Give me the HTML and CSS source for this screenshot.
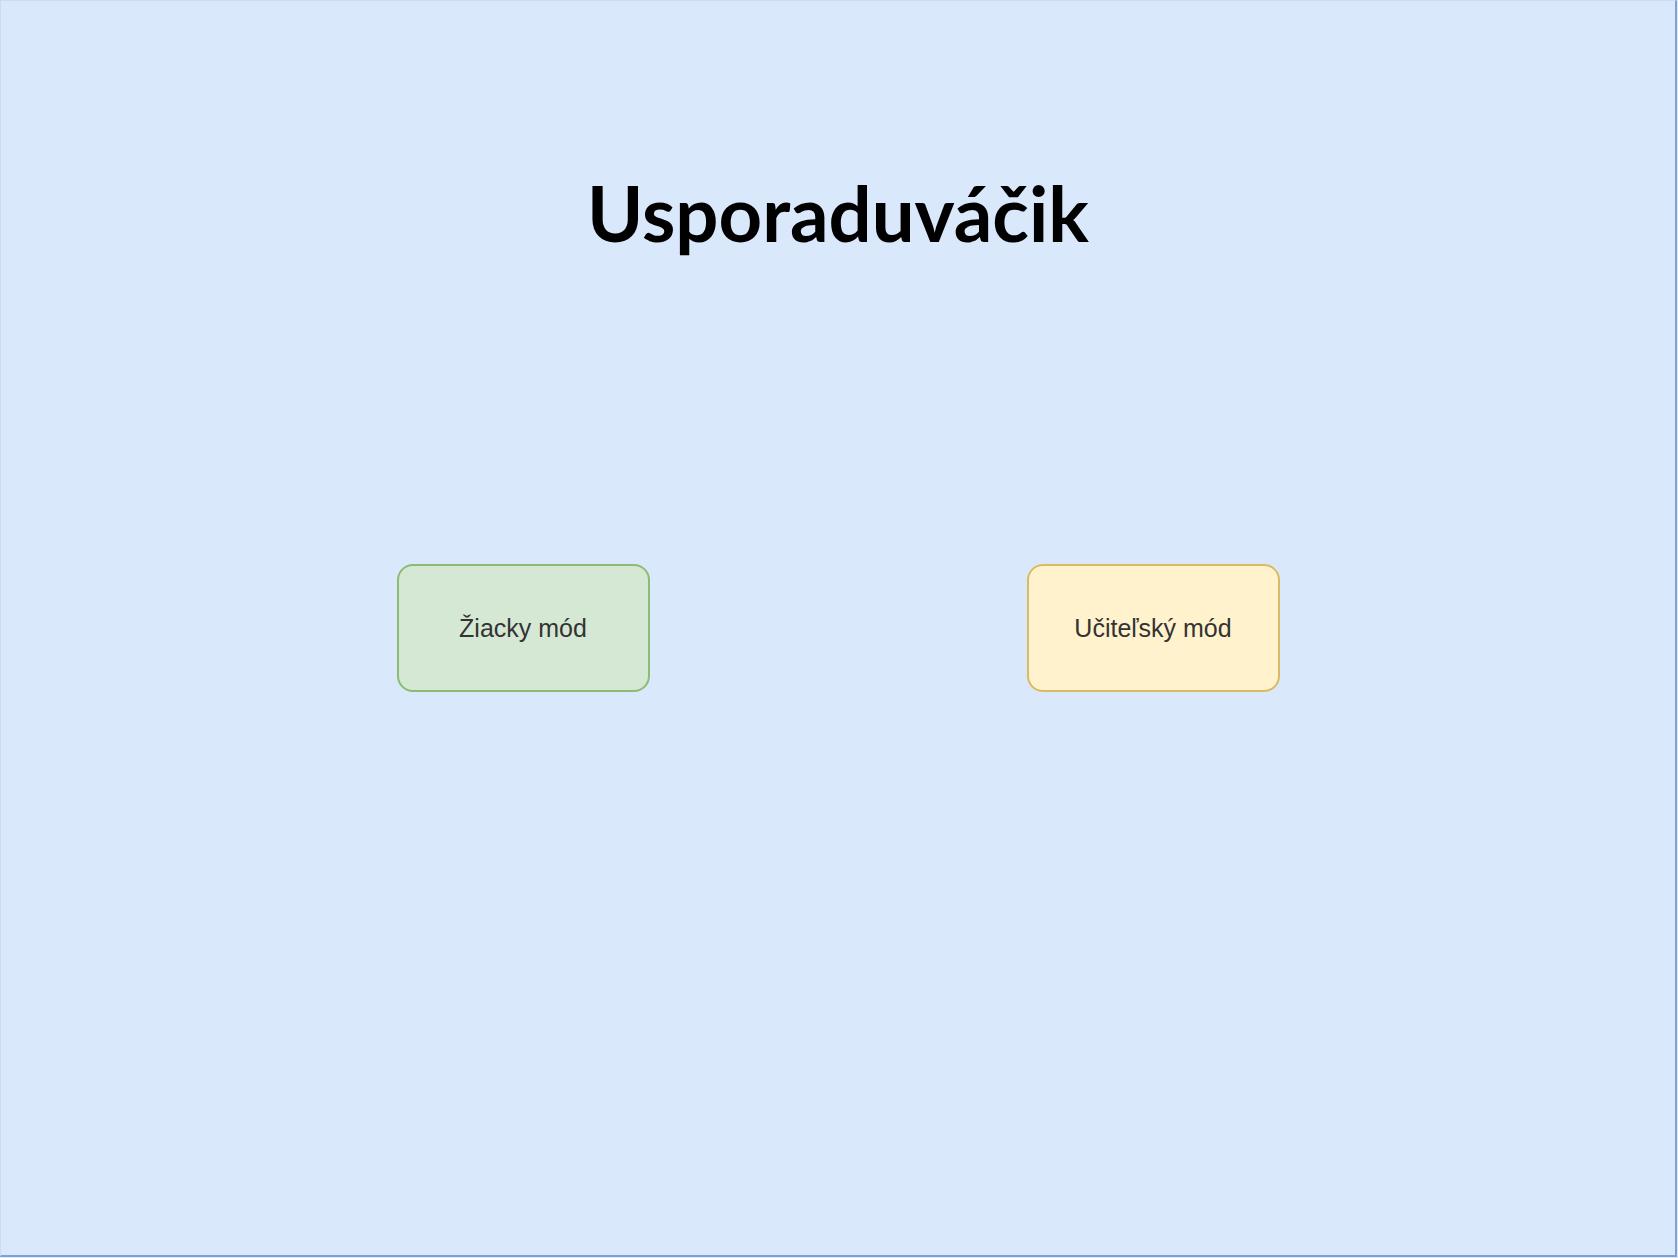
FILE: index.html
```html
<!DOCTYPE html>
<html lang="sk">
<head>
<meta charset="utf-8">
<title>Usporaduváčik</title>
<link rel="stylesheet" href="styles.css">
</head>
<body>
<main class="canvas">
  <h1 class="title">Usporaduváčik</h1>
  <div class="modes">
    <button class="mode mode-student">Žiacky mód</button>
    <button class="mode mode-teacher">Učiteľský mód</button>
  </div>
</main>
</body>
</html>
```
FILE: styles.css
```css
html, body {
  margin: 0;
  padding: 0;
  background: #dae8fc;
}

.canvas {
  box-sizing: border-box;
  width: 1677px;
  height: 1257px;
  background: #dae8fc;
  border-top: 1px solid #c9dcf6;
  border-left: 1px solid #c9dcf6;
  border-right: 2px solid #7fa0d2;
  border-bottom: 2px solid #7fa0d2;
  padding-top: 167px;
}

.title {
  margin: 0;
  text-align: center;
  font-family: "Lato", "DejaVu Sans", sans-serif;
  font-weight: 700;
  font-size: 76px;
  line-height: 90px;
  color: #000;
}

.modes {
  display: flex;
  justify-content: center;
  gap: 377px;
  margin-top: 306px;
}

.mode {
  box-sizing: border-box;
  width: 253px;
  height: 128px;
  border-radius: 16px;
  border: 2px solid;
  font-family: "Liberation Sans", Arial, sans-serif;
  font-size: 25px;
  color: #333;
  padding: 0;
  cursor: pointer;
}

.mode-student {
  background: #d5e8d4;
  border-color: #8cbb72;
}

.mode-teacher {
  background: #fff2cc;
  border-color: #d9bc62;
}
```
